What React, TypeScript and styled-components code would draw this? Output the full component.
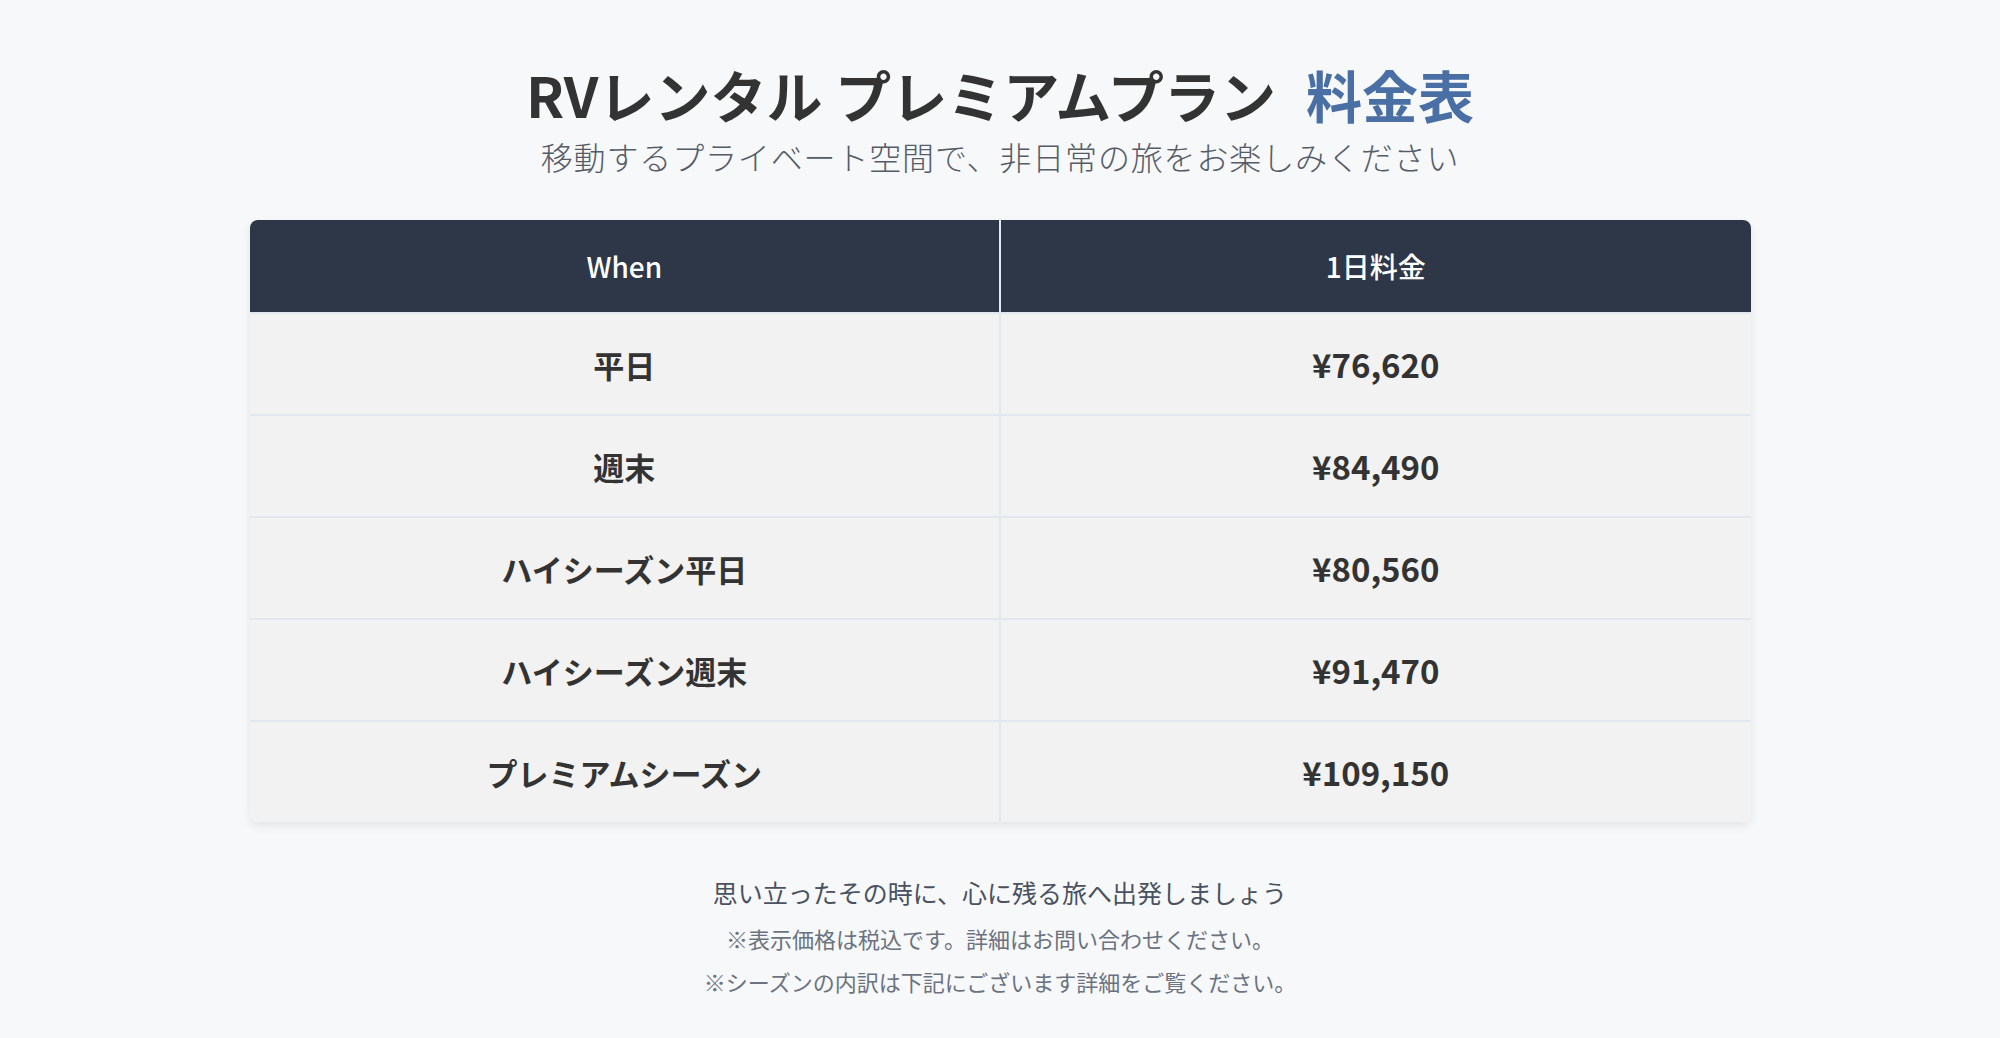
import React from 'react';
import styled, { createGlobalStyle } from 'styled-components';

const GlobalStyle = createGlobalStyle`
  html, body {
    margin: 0;
    padding: 0;
    background: #f7f8fa;
  }
  body {
    font-family: "Noto Sans CJK JP", "Noto Sans", sans-serif;
    color: #333;
  }
`;

const rows = [
  { when: '平日', price: '¥76,620' },
  { when: '週末', price: '¥84,490' },
  { when: 'ハイシーズン平日', price: '¥80,560' },
  { when: 'ハイシーズン週末', price: '¥91,470' },
  { when: 'プレミアムシーズン', price: '¥109,150' },
];

const Page = styled.div`
  min-height: 1038px;
  box-sizing: border-box;
  padding: 60px 0 40px;
  display: flex;
  flex-direction: column;
  align-items: center;
`;

const Title = styled.h1`
  margin: 0;
  font-size: 56px;
  line-height: 67px;
  font-weight: 700;
  color: #333;
`;

const Accent = styled.span`
  margin-left: 30px;
  color: #4a6fa5;
`;

const Subtitle = styled.p`
  margin: 7px 0 0;
  font-size: 32px;
  line-height: 45px;
  font-weight: 300;
  letter-spacing: 0.85px;
  color: #555c68;
`;

const TableWrap = styled.div`
  margin-top: 41px;
  width: 1501px;
  border-radius: 8px;
  overflow: hidden;
  box-shadow: 0 4px 10px rgba(0, 0, 0, 0.08);
`;

const Table = styled.table`
  width: 100%;
  border-collapse: collapse;
  table-layout: fixed;
`;

const HeadCell = styled.th`
  height: 92px;
  padding: 0;
  background: #2d3748;
  color: #fff;
  font-size: 28px;
  font-weight: 500;
  text-align: center;
  & + & {
    border-left: 2px solid #e2e8f0;
  }
`;

const Cell = styled.td<{ $price?: boolean }>`
  height: 100px;
  padding: 0;
  background: #f2f2f2;
  text-align: center;
  font-size: ${(p) => (p.$price ? 33 : 31)}px;
  font-weight: ${(p) => (p.$price ? 700 : 600)};
  color: #333;
  border-top: 2px solid #e2e8f0;
  & + & {
    border-left: 2px solid #e2e8f0;
  }
`;

const Footer = styled.div`
  margin-top: 50px;
  display: flex;
  flex-direction: column;
  align-items: center;
`;

const Lead = styled.p`
  margin: 0 0 5px;
  font-size: 25px;
  line-height: 40px;
  color: #4a5160;
`;

const Note = styled.p`
  margin: 0;
  font-size: 22px;
  line-height: 43px;
  color: #6b7280;
`;

export default function App() {
  return (
    <Page>
      <GlobalStyle />
      <Title>
        RVレンタル プレミアムプラン<Accent>料金表</Accent>
      </Title>
      <Subtitle>移動するプライベート空間で、非日常の旅をお楽しみください</Subtitle>
      <TableWrap>
        <Table>
          <thead>
            <tr>
              <HeadCell>When</HeadCell>
              <HeadCell>1日料金</HeadCell>
            </tr>
          </thead>
          <tbody>
            {rows.map((r) => (
              <tr key={r.when}>
                <Cell>{r.when}</Cell>
                <Cell $price>{r.price}</Cell>
              </tr>
            ))}
          </tbody>
        </Table>
      </TableWrap>
      <Footer>
        <Lead>思い立ったその時に、心に残る旅へ出発しましょう</Lead>
        <Note>※表示価格は税込です。詳細はお問い合わせください。</Note>
        <Note>※シーズンの内訳は下記にございます詳細をご覧ください。</Note>
      </Footer>
    </Page>
  );
}
